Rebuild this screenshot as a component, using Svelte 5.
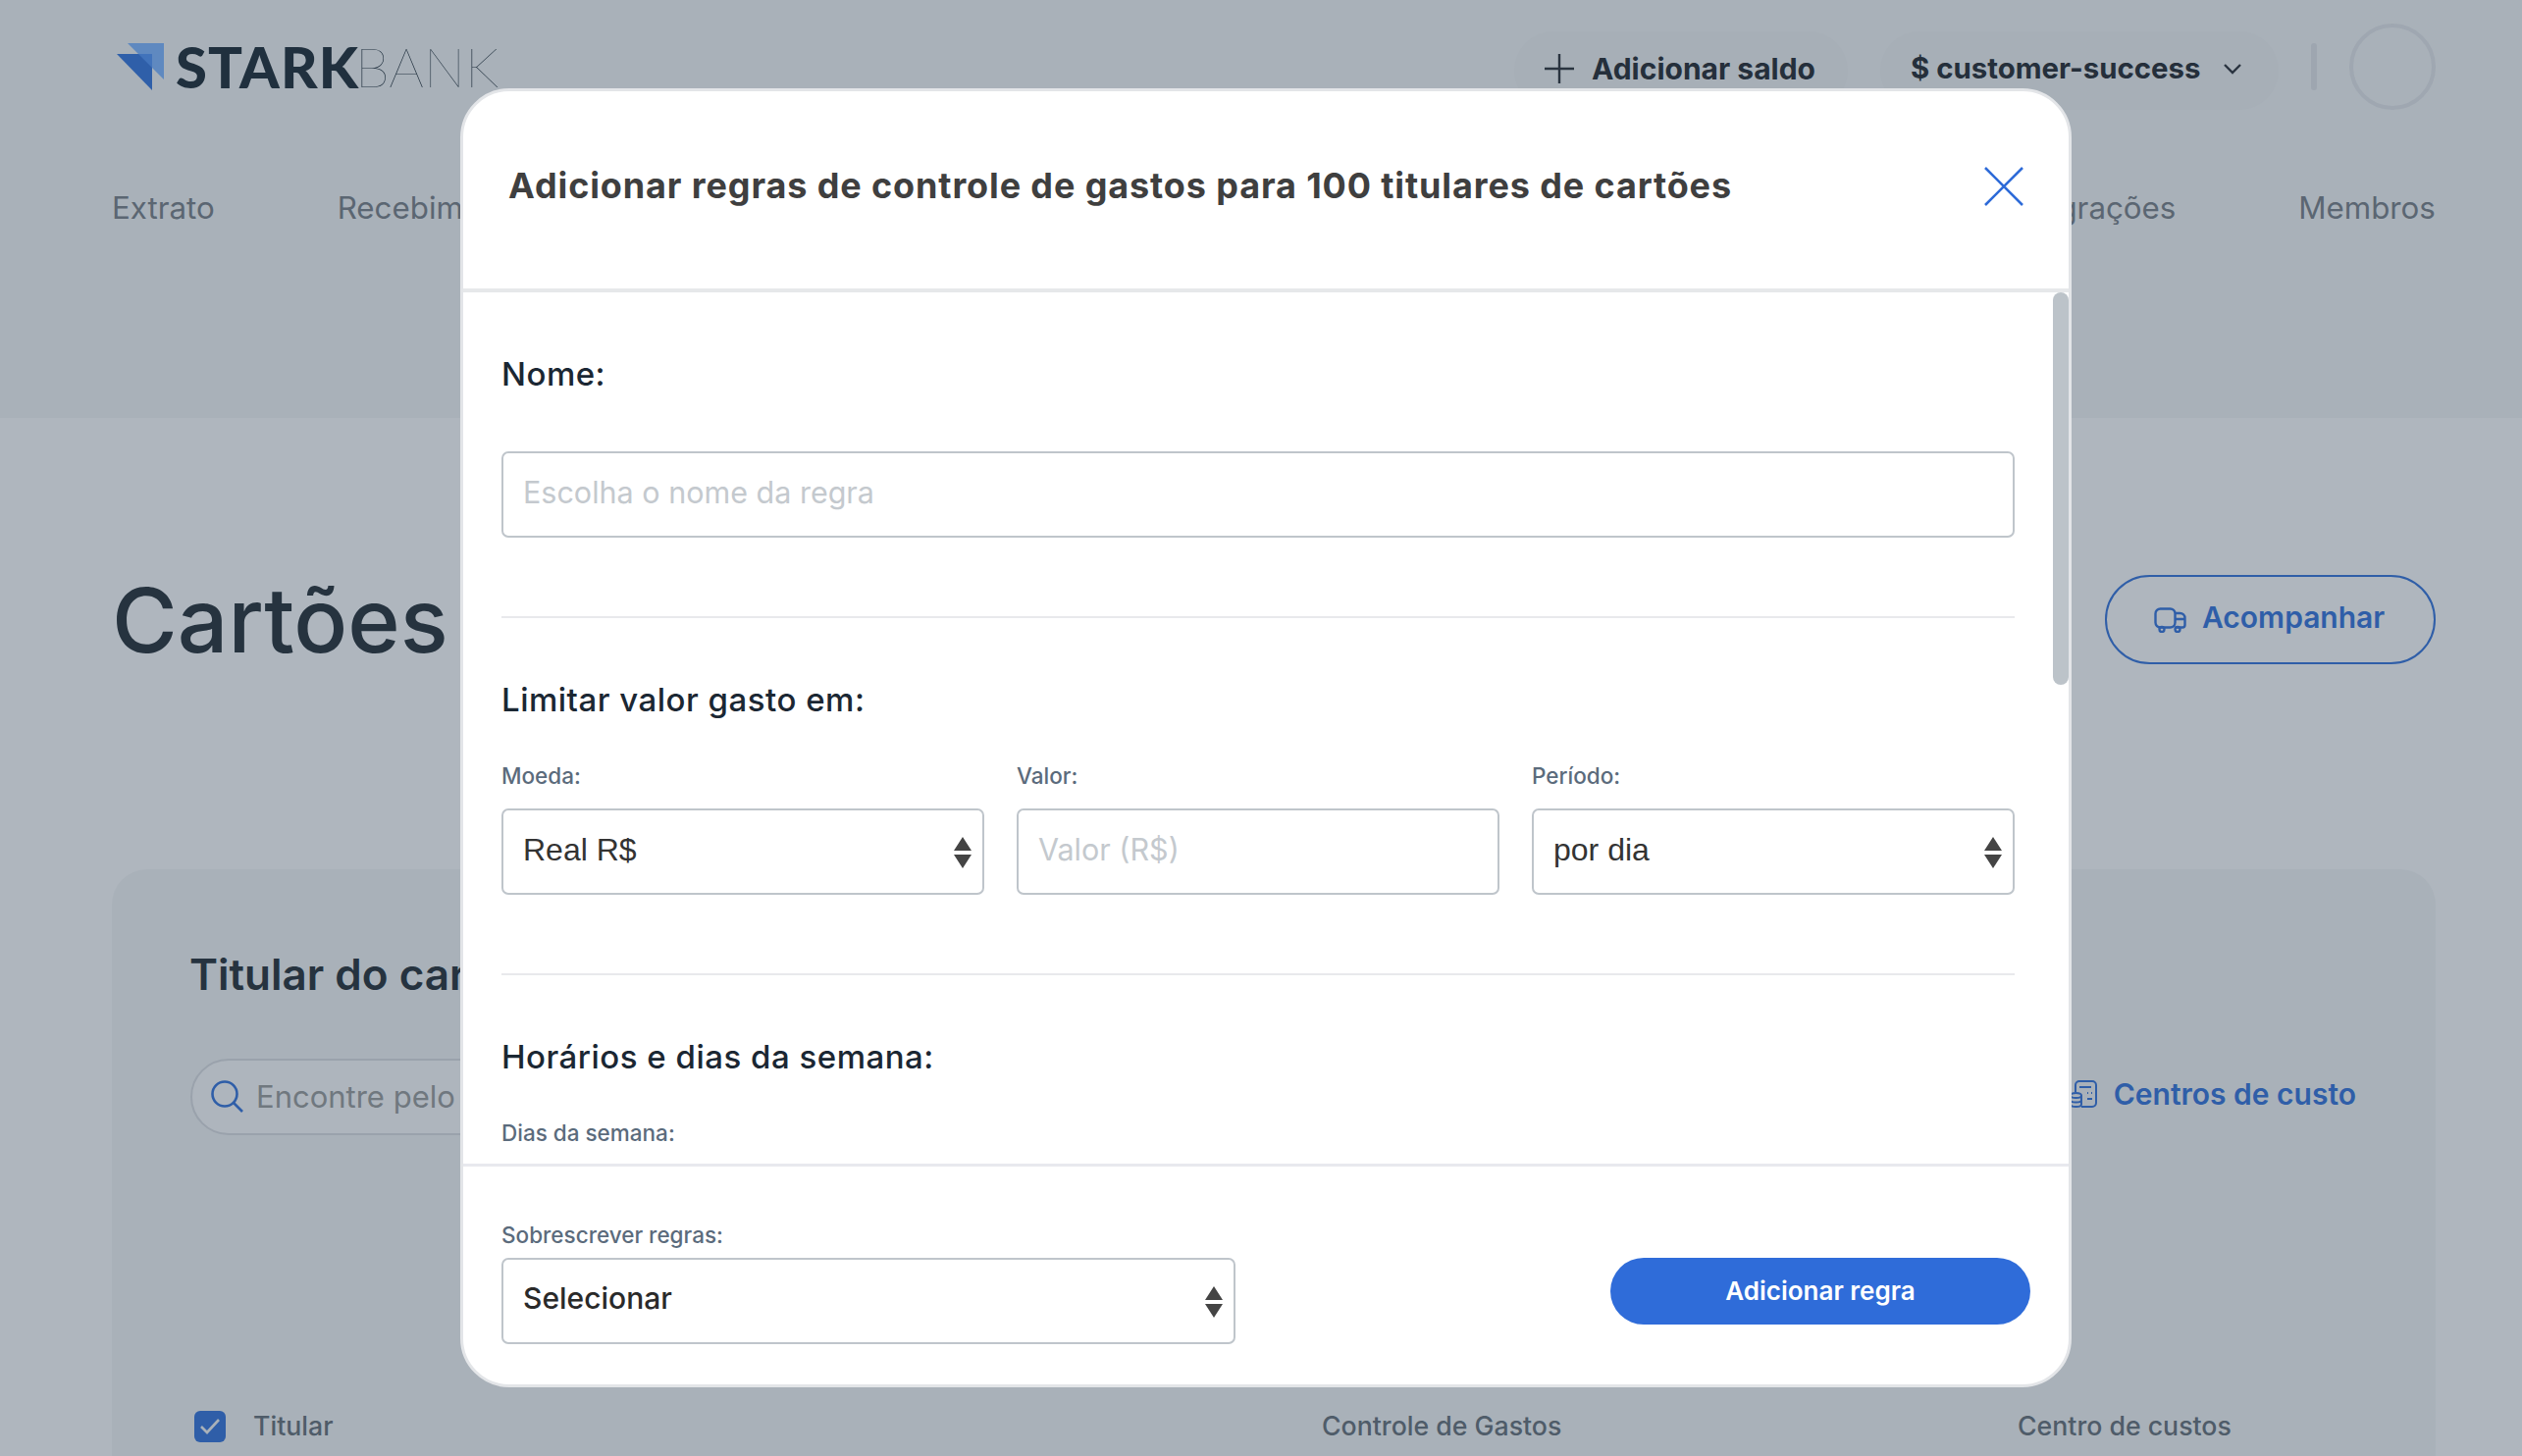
<script lang="ts">
	const navItems = ['Extrato', 'Recebimentos', 'Pagamentos', 'Boletos', 'Cartões', 'Transferências', 'Faturas', 'Integrações', 'Membros'];
</script>

<div class="page">
	<header class="topbar">
		<div class="toprow">
			<div class="logo">
				<svg class="mark" width="50" height="50" viewBox="0 0 50 50">
					<polygon points="12,1 49,1 49,38 37,26 37,12 23,12" fill="#5f89c0" />
					<polygon points="1,12 37,12 37,49" fill="#2f5fa9" />
					<polygon points="23,12 37,12 37,26" fill="#4173bb" />
				</svg>
				<span class="stark">STARK</span><span class="bank">BANK</span>
			</div>
			<div class="actions">
				<div class="pill first">
					<svg width="32" height="32" viewBox="0 0 32 32"><path d="M16 1v30M1 16h30" stroke="#2a3440" stroke-width="2.4" fill="none" /></svg>
					<span>Adicionar saldo</span>
				</div>
				<div class="pill second">
					<span>$ customer-success</span>
					<svg width="20" height="12" viewBox="0 0 20 12"><path d="M2 2l8 8 8-8" stroke="#2a3440" stroke-width="2.4" fill="none" /></svg>
				</div>
				<div class="sep"></div>
				<div class="avatar"></div>
			</div>
		</div>
		<nav>
			{#each navItems as item}
				<span>{item}</span>
			{/each}
		</nav>
	</header>

	<main>
		<div class="titlerow">
			<h1>Cartões</h1>
			<div class="track">
				<svg width="33" height="26" viewBox="0 0 33 26" fill="none" stroke="#2f5ea8" stroke-width="2.4">
					<rect x="1.5" y="1.5" width="20" height="19" rx="5" />
					<path d="M21.5 6h5a5 5 0 0 1 5 5v7a2.5 2.5 0 0 1-2.5 2.5h-7.5M21.5 12h10" />
					<circle cx="8" cy="22.5" r="2.5" />
					<circle cx="24" cy="22.5" r="2.5" />
				</svg>
				<span>Acompanhar</span>
			</div>
		</div>

		<section class="card">
			<h2>Titular do cartão</h2>
			<div class="filters">
				<div class="search">
					<svg width="34" height="34" viewBox="0 0 34 34" fill="none" stroke="#2f5ea8" stroke-width="2.6">
						<circle cx="15" cy="15" r="12.5" />
						<path d="M24 24l9 9" />
					</svg>
					<span>Encontre pelo nome</span>
				</div>
				<div class="costs">
					<svg width="28" height="28" viewBox="0 0 28 28" fill="none" stroke="#2f5ea8" stroke-width="2">
						<path d="M6 12V5a4 4 0 0 1 4-4h13a4 4 0 0 1 4 4v18a4 4 0 0 1-4 4H12" />
						<path d="M10 7h12M18 13h1M22 13h1M18 19h5" />
						<ellipse cx="6.5" cy="15.5" rx="5.5" ry="2.5" />
						<path d="M1 15.500v9c0 1.400 2.500 2.500 5.500 2.500s5.500-1.100 5.500-2.500v-9M1 20c0 1.400 2.500 2.500 5.500 2.500s5.500-1.100 5.500-2.500" />
					</svg>
					<span>Centros de custo</span>
				</div>
			</div>
			<div class="tablehead">
				<span class="check">
					<svg width="22" height="18" viewBox="0 0 22 18"><path d="M2 9l6 6L20 2" stroke="#a9b1b9" stroke-width="2.600" fill="none" /></svg>
				</span>
				<span class="holder">Titular</span>
				<span class="rules">Controle de Gastos</span>
				<span>Centro de custos</span>
			</div>
		</section>
	</main>

	<div class="modal">
		<div class="modal-head">
			<h3>Adicionar regras de controle de gastos para 100 titulares de cartões</h3>
			<svg width="40" height="40" viewBox="0 0 40 40"><path d="M1 1l38 38M39 1L1 39" stroke="#2e6bd8" stroke-width="2.600" fill="none" /></svg>
		</div>

		<div class="modal-body">
			<div class="scrollthumb"></div>
			<h4 class="nome">Nome:</h4>
			<input class="field" type="text" placeholder="Escolha o nome da regra" />
			<hr />
			<h4>Limitar valor gasto em:</h4>
			<div class="limits">
				<div>
					<p class="lbl">Moeda:</p>
					<div class="select arial">
						<span>Real R$</span>
						{@render arrows()}
					</div>
				</div>
				<div>
					<p class="lbl">Valor:</p>
					<input class="field" type="text" placeholder="Valor (R$)" />
				</div>
				<div>
					<p class="lbl">Período:</p>
					<div class="select arial">
						<span>por dia</span>
						{@render arrows()}
					</div>
				</div>
			</div>
			<hr />
			<h4>Horários e dias da semana:</h4>
			<p class="lbl days">Dias da semana:</p>
		</div>

		<div class="modal-foot">
			<div class="overwrite">
				<p class="lbl">Sobrescrever regras:</p>
				<div class="select ui">
					<span>Selecionar</span>
					{@render arrows()}
				</div>
			</div>
			<button type="button">Adicionar regra</button>
		</div>
	</div>
</div>

{#snippet arrows()}
	<svg class="arrows" width="20" height="32" viewBox="0 0 20 32">
		<path d="M10 0l9 14H1zM10 32L1 18h18z" fill="#444" />
	</svg>
{/snippet}

<style>
	:global(body) {
		background: #afb6be;
		font-family: Inter, 'Noto Sans', sans-serif;
	}
	.page {
		position: relative;
		height: 1484px;
		overflow: hidden;
		background: #afb6be;
	}
	.topbar {
		height: 426px;
		box-sizing: border-box;
		padding: 24px 88px 0 114px;
		background: #a9b1b9;
	}
	.toprow {
		display: flex;
		justify-content: space-between;
		align-items: center;
		height: 88px;
	}
	.logo {
		display: flex;
		align-items: center;
		font-family: Lato, sans-serif;
		color: #20303e;
		font-size: 58px;
		line-height: 88px;
		height: 88px;
	}
	.mark {
		margin: 0 11px 0 4px;
	}
	.stark {
		font-weight: 900;
		letter-spacing: 1.1px;
	}
	.bank {
		font-weight: 100;
		font-size: 56px;
		margin-left: -4px;
	}
	.actions {
		display: flex;
		align-items: center;
		gap: 33px;
	}
	.pill {
		height: 80px;
		margin-top: 8px;
		padding-bottom: 5px;
		box-sizing: border-box;
		display: flex;
		align-items: center;
		border-radius: 40px;
		background: #a7afb7;
		color: #252f3b;
		font-size: 30px;
		font-weight: 700;
	}
	.first {
		width: 340px;
		padding-left: 30px;
		gap: 17px;
	}
	.second {
		width: 406px;
		padding-left: 31px;
		gap: 22px;
		font-size: 29.4px;
	}
	.sep {
		width: 6px;
		height: 48px;
		border-radius: 3px;
		background: #9ea6b0;
	}
	.avatar {
		width: 88px;
		height: 88px;
		box-sizing: border-box;
		border: 4px solid #9fa7b1;
		border-radius: 50%;
	}
	nav {
		display: flex;
		justify-content: space-between;
		margin-top: 80px;
		font-size: 31.3px;
		line-height: 40px;
		color: #5b6672;
	}
	main {
		padding: 160px 88px 0 114px;
	}
	.titlerow {
		display: flex;
		justify-content: space-between;
		align-items: center;
		height: 91px;
	}
	h1 {
		margin: 0;
		font-size: 91px;
		font-weight: 500;
		color: #26333f;
	}
	.track {
		width: 337px;
		height: 91px;
		box-sizing: border-box;
		display: flex;
		align-items: center;
		gap: 16px;
		padding: 0 0 6px 48px;
		border: 2px solid #2f5ea8;
		border-radius: 46px;
		color: #2f5ea8;
		font-size: 30px;
		font-weight: 600;
	}
	.track svg {
		position: relative;
		top: 3px;
	}
	.card {
		height: 700px;
		margin-top: 209px;
		box-sizing: border-box;
		padding: 77px 81px 0 79px;
		background: #a9b1b9;
		border-radius: 36px;
	}
	h2 {
		margin: 0;
		font-size: 44px;
		line-height: 60px;
		font-weight: 600;
		color: #26333f;
	}
	.filters {
		display: flex;
		justify-content: space-between;
		align-items: center;
		margin-top: 56px;
		height: 78px;
		padding-left: 1px;
	}
	.search {
		width: 900px;
		height: 78px;
		box-sizing: border-box;
		display: flex;
		align-items: center;
		gap: 13px;
		padding: 0 0 2px 18px;
		border: 2px solid #9aa2ac;
		border-radius: 39px;
		background: #aeb5bd;
		color: #70787f;
		font-size: 31px;
	}
	.costs {
		display: flex;
		align-items: center;
		gap: 17px;
		padding-bottom: 6px;
		color: #2f5ea8;
		font-size: 30px;
		font-weight: 600;
	}
	.tablehead {
		display: flex;
		align-items: center;
		margin-top: 281px;
		padding-left: 5px;
		height: 32px;
		font-size: 26.7px;
		font-weight: 500;
		color: #4f5c69;
	}
	.holder,
	.rules,
	.tablehead > span:last-child {
		position: relative;
		top: -1px;
	}
	.check {
		width: 32px;
		height: 32px;
		margin-right: 28px;
		display: flex;
		align-items: center;
		justify-content: center;
		background: #2f5ea8;
		border-radius: 6px;
	}
	.holder {
		width: 1089px;
	}
	.rules {
		width: 709px;
	}
	.modal {
		position: absolute;
		left: 469px;
		top: 90px;
		width: 1642px;
		height: 1324px;
		box-sizing: border-box;
		display: flex;
		flex-direction: column;
		background: #fff;
		border: 3px solid #e3e5e8;
		border-radius: 50px;
		overflow: hidden;
	}
	.modal-head {
		height: 205px;
		flex: none;
		box-sizing: border-box;
		display: flex;
		justify-content: space-between;
		align-items: center;
		padding: 0 46px 8px 46px;
		border-bottom: 4px solid #e6e8ea;
	}
	h3 {
		margin: 0 0 2px;
		font-size: 36px;
		letter-spacing: 0.88px;
		font-weight: 700;
		color: #3f3f3f;
	}
	.modal-body {
		position: relative;
		flex: 1;
		min-height: 0;
		overflow: hidden;
		padding: 61px 55px 0 39px;
	}
	.scrollthumb {
		position: absolute;
		top: 0;
		right: 0;
		width: 16px;
		height: 400px;
		border-radius: 8px;
		background: #bcc3c9;
	}
	h4 {
		margin: 61px 0 0;
		font-size: 33px;
		letter-spacing: 0.5px;
		line-height: 44px;
		font-weight: 500;
		color: #1b2733;
	}
	h4.nome {
		margin-top: 0;
	}
	.field {
		display: block;
		width: 100%;
		height: 88px;
		margin: 0;
		box-sizing: border-box;
		padding: 0 20px 6px;
		border: 2px solid #bfc5cb;
		border-radius: 7px;
		background: #fff;
		font-family: inherit;
		font-size: 30.5px;
		outline: none;
	}
	.nome + .field {
		margin-top: 57px;
	}
	.field::placeholder {
		color: #c4c9ce;
		opacity: 1;
	}
	hr {
		margin: 80px 0 0;
		border: 0;
		border-top: 2px solid #e8e9ec;
	}
	.limits {
		display: grid;
		grid-template-columns: 1fr 1fr 1fr;
		gap: 33px;
		margin-top: 41px;
	}
	.lbl {
		margin: 0 0 18px;
		font-size: 22.5px;
		line-height: 30px;
		font-weight: 500;
		color: #5b6b7c;
	}
	.days {
		margin-top: 41px;
	}
	.select {
		position: relative;
		height: 88px;
		box-sizing: border-box;
		display: flex;
		align-items: center;
		padding: 0 0 3px 20px;
		border: 2px solid #bfc5cb;
		border-radius: 7px;
		color: #333;
	}
	.arial {
		font-family: 'Liberation Sans', Arial, sans-serif;
		font-size: 32px;
	}
	.ui {
		padding-bottom: 6px;
		font-size: 30px;
		font-weight: 500;
		color: #2a2a2a;
	}
	.arrows {
		position: absolute;
		right: 10px;
		top: 27px;
	}
	.modal-foot {
		flex: none;
		height: 225px;
		box-sizing: border-box;
		display: flex;
		justify-content: space-between;
		align-items: flex-start;
		padding: 55px 39px 0 39px;
		border-top: 3px solid #e8e9ee;
	}
	.overwrite {
		width: 748px;
	}
	.overwrite .lbl {
		margin-bottom: 8px;
	}
	button {
		width: 428px;
		height: 68px;
		margin-top: 38px;
		padding-bottom: 3px;
		border: 0;
		border-radius: 34px;
		background: #2f6cd9;
		color: #fff;
		font-family: inherit;
		font-size: 26px;
		font-weight: 600;
	}
</style>
